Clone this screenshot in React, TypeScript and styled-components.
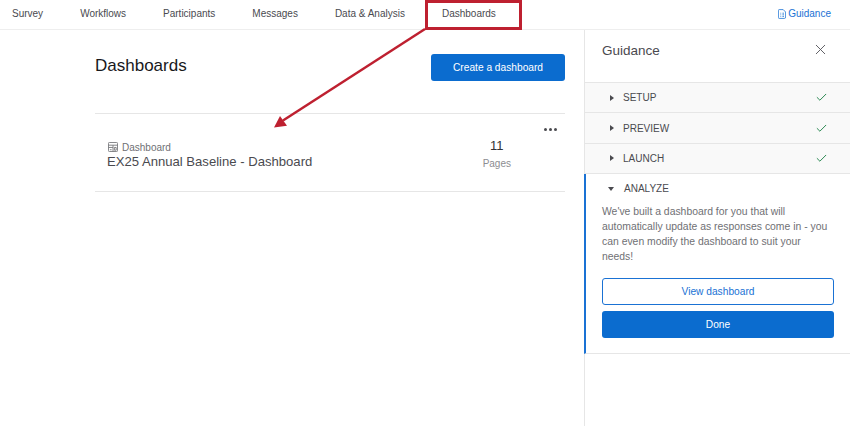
import React from 'react'
import styled, { createGlobalStyle } from 'styled-components'
import { X, Check } from 'lucide-react'

const GlobalStyle = createGlobalStyle`
  html, body {
    margin: 0;
    padding: 0;
    background: #fff;
    font-family: "Liberation Sans", Arial, sans-serif;
  }
  * { box-sizing: border-box; }
`

const Page = styled.div`
  position: relative;
  width: 850px;
  height: 426px;
  overflow: hidden;
  background: #fff;
`

const TopNav = styled.div`
  display: flex;
  align-items: center;
  gap: 37px;
  height: 30px;
  border-bottom: 1px solid #eeeeee;
  padding: 0 19px 2px 12px;
`

const NavLink = styled.div`
  font-size: 10px;
  color: #4a4a4f;
  white-space: nowrap;
`

const GuidanceLink = styled.div`
  margin-left: auto;
  display: flex;
  align-items: center;
  gap: 2px;
  font-size: 10px;
  color: #1a72d4;
`

const Body = styled.div`
  display: flex;
  height: 396px;
`

const Main = styled.div`
  width: 584px;
  padding: 24px 19px 0 95px;
`

const TitleRow = styled.div`
  display: flex;
  justify-content: space-between;
  align-items: flex-start;
  height: 59px;
`

const Title = styled.h1`
  margin: 1px 0 0;
  font-size: 17px;
  line-height: 22px;
  font-weight: 400;
  color: #18181b;
`

const PrimaryButton = styled.button<{ $wide?: boolean }>`
  width: ${({ $wide }) => ($wide ? '100%' : '134px')};
  height: 27px;
  border: none;
  border-radius: 3px;
  background: #0b6ccf;
  color: #fff;
  font-family: inherit;
  font-size: 10.2px;
  padding: 0;
`

const OutlineButton = styled(PrimaryButton)`
  background: #fff;
  color: #1a72d4;
  border: 1px solid #1a72d4;
`

const DashboardRow = styled.div`
  position: relative;
  display: flex;
  justify-content: space-between;
  height: 79px;
  border-top: 1px solid #e6e6e6;
  border-bottom: 1px solid #e6e6e6;
  padding: 26px 54px 0 12px;
`

const TypeLabel = styled.div`
  display: flex;
  align-items: center;
  gap: 4px;
  height: 14px;
  padding-left: 1px;
  font-size: 10px;
  color: #6f7074;
`

const RowTitle = styled.div`
  font-size: 13.1px;
  line-height: 15px;
  color: #4a4a4f;
`

const PageCount = styled.div`
  display: flex;
  flex-direction: column;
  align-items: center;
  margin-top: -3px;
`

const CountValue = styled.div`
  font-size: 13px;
  line-height: 18px;
  color: #333336;
`

const CountLabel = styled.div`
  font-size: 10px;
  line-height: 17px;
  color: #8c8d91;
`

const MoreDots = styled.div`
  position: absolute;
  right: 8px;
  top: 14px;
  display: flex;
  gap: 2px;
`

const Dot = styled.span`
  width: 3px;
  height: 3px;
  border-radius: 50%;
  background: #4a4a4f;
`

const Panel = styled.aside`
  width: 266px;
  border-left: 1px solid #e6e6e6;
`

const PanelHeader = styled.div`
  display: flex;
  justify-content: space-between;
  align-items: flex-start;
  height: 53px;
  padding: 12px 21px 0 17px;
  border-bottom: 1px solid #e6e6e6;
  font-size: 13.5px;
  line-height: 18px;
  color: #4a4a4f;
`

const CloseIcon = styled(X)`
  margin-top: -1px;
`

const StepRow = styled.div`
  display: flex;
  align-items: center;
  height: 30.4px;
  padding: 0 22px 0 25px;
  background: #f9f9f9;
  border-bottom: 1px solid #e6e6e6;
`

const StepName = styled.span`
  margin-left: 9px;
  flex: 1;
  font-size: 10px;
  color: #4a4a4f;
`

const CaretRight = styled.span`
  width: 0;
  height: 0;
  border-top: 3.5px solid transparent;
  border-bottom: 3.5px solid transparent;
  border-left: 4px solid #4a4a4f;
`

const CaretDown = styled.span`
  width: 0;
  height: 0;
  margin-right: 1px;
  border-left: 3.5px solid transparent;
  border-right: 3.5px solid transparent;
  border-top: 4px solid #4a4a4f;
`

const ActiveStep = styled.div`
  height: 179.5px;
  border-left: 2px solid #1a72d4;
  border-bottom: 1px solid #e6e6e6;
  margin-left: -1px;
  padding: 0 16px;
`

const ActiveHeader = styled.div`
  display: flex;
  align-items: center;
  height: 29px;
  padding-left: 6px;
`

const StepText = styled.p`
  margin: 1px 0 14px;
  font-size: 10.4px;
  line-height: 15px;
  color: #6f7074;
`

const ButtonStack = styled.div`
  display: flex;
  flex-direction: column;
  gap: 6px;
`

const Callout = styled.svg`
  position: absolute;
  left: 0;
  top: 0;
  pointer-events: none;
`

const navItems = ['Survey', 'Workflows', 'Participants', 'Messages', 'Data & Analysis', 'Dashboards']

const steps = ['SETUP', 'PREVIEW', 'LAUNCH']

const GuideIcon: React.FC = () => (
  <svg width="8" height="10" viewBox="0 0 10 12" fill="none" stroke="#1a72d4" strokeWidth="1">
    <path d="M1.5.5h5l3 3v6.500a1.500 1.500 0 0 1-1.500 1.500H1.500a1 1 0 0 1-1-1v-9a1 1 0 0 1 1-1z" />
    <path d="M3 5h1M5.500 5h2M3 7h1M5.500 7h2M3 9h1M5.500 9h2" />
  </svg>
)

const DashboardIcon: React.FC = () => (
  <svg width="10" height="10" viewBox="0 0 11 11" fill="none" stroke="#77787c" strokeWidth="1">
    <rect x=".5" y=".5" width="10" height="10" rx="1" />
    <path d="M.5 3.500h10M.5 6h5M5.500 3.500v7M2 8.500h2M7 6h2v3H7z" />
  </svg>
)

const App: React.FC = () => {
  return (
    <Page>
      <GlobalStyle />
      <TopNav>
        {navItems.map((item) => (
          <NavLink key={item}>{item}</NavLink>
        ))}
        <GuidanceLink>
          <GuideIcon />
          Guidance
        </GuidanceLink>
      </TopNav>
      <Body>
        <Main>
          <TitleRow>
            <Title>Dashboards</Title>
            <PrimaryButton>Create a dashboard</PrimaryButton>
          </TitleRow>
          <DashboardRow>
            <div>
              <TypeLabel>
                <DashboardIcon />
                Dashboard
              </TypeLabel>
              <RowTitle>EX25 Annual Baseline - Dashboard</RowTitle>
            </div>
            <PageCount>
              <CountValue>11</CountValue>
              <CountLabel>Pages</CountLabel>
            </PageCount>
            <MoreDots>
              <Dot />
              <Dot />
              <Dot />
            </MoreDots>
          </DashboardRow>
        </Main>
        <Panel>
          <PanelHeader>
            Guidance
            <CloseIcon size={17} color="#55555a" strokeWidth={1.3} />
          </PanelHeader>
          {steps.map((step) => (
            <StepRow key={step}>
              <CaretRight />
              <StepName>{step}</StepName>
              <Check size={13} color="#1a8046" strokeWidth={1.7} />
            </StepRow>
          ))}
          <ActiveStep>
            <ActiveHeader>
              <CaretDown />
              <StepName>ANALYZE</StepName>
            </ActiveHeader>
            <StepText>
              We've built a dashboard for you that will automatically update as responses come in - you can even modify the dashboard to suit your needs!
            </StepText>
            <ButtonStack>
              <OutlineButton $wide>View dashboard</OutlineButton>
              <PrimaryButton $wide>Done</PrimaryButton>
            </ButtonStack>
          </ActiveStep>
        </Panel>
      </Body>
      <Callout width="850" height="426" viewBox="0 0 850 426">
        <rect x="426.500" y="1.500" width="94" height="27" fill="none" stroke="#be2030" strokeWidth="3" />
        <path d="M425 29L283 120.500" stroke="#be2030" strokeWidth="2.500" fill="none" />
        <path d="M274 127.500L287 125.700 280 116z" fill="#be2030" />
      </Callout>
    </Page>
  )
}

export default App
